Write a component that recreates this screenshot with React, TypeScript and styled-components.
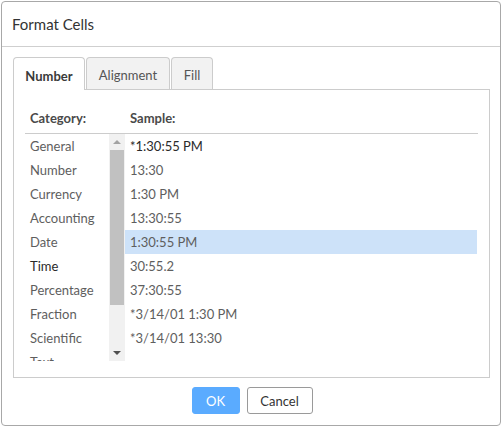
import React from "react"
import styled, { createGlobalStyle } from "styled-components"

const GlobalStyle = createGlobalStyle`
  html, body {
    margin: 0;
    padding: 0;
    background: #ffffff;
    font-family: Lato, "Open Sans", sans-serif;
  }
`

const categories = [
  "General",
  "Number",
  "Currency",
  "Accounting",
  "Date",
  "Time",
  "Percentage",
  "Fraction",
  "Scientific",
  "Text",
]

const samples = [
  "*1:30:55 PM",
  "13:30",
  "1:30 PM",
  "13:30:55",
  "1:30:55 PM",
  "30:55.2",
  "37:30:55",
  "*3/14/01 1:30 PM",
  "*3/14/01 13:30",
]

const tabs = ["Number", "Alignment", "Fill"]
const tabWidths = [72, 84, 42]

export default function App() {
  return (
    <>
      <GlobalStyle />
      <Dialog>
        <Header>
          <Title>Format Cells</Title>
        </Header>
        <Body>
          <TabBar>
            {tabs.map((t, i) => (
              <Tab key={t} $active={i === 0} $width={tabWidths[i]}>
                {t}
              </Tab>
            ))}
          </TabBar>
          <Panel>
            <Table>
              <HeadRow>
                <HeadCell $width={100}>Category:</HeadCell>
                <HeadCell $width={352}>Sample:</HeadCell>
              </HeadRow>
              <ListArea>
                <CategoryColumn>
                  <CategoryList>
                    {categories.map(c => (
                      <Item key={c} $dark={c === "Time"}>
                        {c}
                      </Item>
                    ))}
                  </CategoryList>
                  <ScrollBar>
                    <Arrow $up $disabled />
                    <Track>
                      <Thumb />
                    </Track>
                    <Arrow />
                  </ScrollBar>
                </CategoryColumn>
                <SampleList>
                  {samples.map((s, i) => (
                    <Item key={i} $dark={i === 0} $selected={i === 4}>
                      {s}
                    </Item>
                  ))}
                </SampleList>
              </ListArea>
            </Table>
          </Panel>
        </Body>
        <Footer>
          <Button $primary>OK</Button>
          <Button>Cancel</Button>
        </Footer>
      </Dialog>
    </>
  )
}

const Dialog = styled.div`
  box-sizing: border-box;
  margin: 1px 0 0 1px;
  width: 500px;
  height: 425px;
  border: 1px solid #a8a8a8;
  border-radius: 4px;
  background: #ffffff;
  display: flex;
  flex-direction: column;
`

const Header = styled.div`
  height: 44px;
  display: flex;
  align-items: center;
  padding-left: 10px;
  border-bottom: 1px solid #cfcfcf;
`

const Title = styled.div`
  font-size: 15px;
  color: #333333;
`

const Body = styled.div`
  padding: 10px 10px 0 11px;
`

const TabBar = styled.div`
  display: flex;
  gap: 1px;
  height: 32px;
  position: relative;
  z-index: 1;
`

const Tab = styled.div<{ $active?: boolean; $width: number }>`
  box-sizing: border-box;
  width: ${p => p.$width}px;
  height: ${p => (p.$active ? 33 : 32)}px;
  border: 1px solid #cccccc;
  border-bottom: none;
  border-radius: 4px 4px 0 0;
  background: ${p => (p.$active ? "#ffffff" : "#f2f2f2")};
  color: ${p => (p.$active ? "#3a3a3a" : "#555555")};
  font-weight: ${p => (p.$active ? 700 : 400)};
  font-size: 13px;
  display: flex;
  align-items: center;
  justify-content: center;
  padding-top: 3px;
`

const Panel = styled.div`
  box-sizing: border-box;
  width: 477px;
  height: 289px;
  border: 1px solid #cccccc;
  padding: 13px 11px 15px 11px;
`

const Table = styled.div`
  display: flex;
  flex-direction: column;
`

const HeadRow = styled.div`
  display: flex;
  height: 30px;
  border-bottom: 1px solid #cccccc;
`

const HeadCell = styled.div<{ $width: number }>`
  width: ${p => p.$width}px;
  padding-left: 5px;
  box-sizing: border-box;
  font-size: 13px;
  font-weight: 700;
  color: #4a4a4a;
  display: flex;
  align-items: center;
`

const ListArea = styled.div`
  display: flex;
  height: 227px;
  overflow: hidden;
`

const CategoryColumn = styled.div`
  width: 100px;
  display: flex;
`

const CategoryList = styled.div`
  width: 84px;
  display: flex;
  flex-direction: column;
`

const SampleList = styled.div`
  width: 352px;
  display: flex;
  flex-direction: column;
`

const Item = styled.div<{ $dark?: boolean; $selected?: boolean }>`
  flex: none;
  height: 24px;
  line-height: 24px;
  padding-left: 5px;
  font-size: 13px;
  white-space: nowrap;
  color: ${p => (p.$dark ? "#2a2a2a" : "#5e5e5e")};
  background: ${p => (p.$selected ? "#cde2f9" : "transparent")};
`

const ScrollBar = styled.div`
  width: 16px;
  background: #f1f1f1;
  display: flex;
  flex-direction: column;
`

const Track = styled.div`
  flex: 1;
  padding: 0 1px;
`

const Thumb = styled.div`
  height: 155px;
  background: #c1c1c1;
`

const Arrow = styled.div<{ $up?: boolean; $disabled?: boolean }>`
  height: 16px;
  display: flex;
  align-items: center;
  justify-content: center;
  &::after {
    content: "";
    width: 0;
    height: 0;
    border-left: 4px solid transparent;
    border-right: 4px solid transparent;
    ${p =>
      p.$up
        ? `border-bottom: 4px solid ${p.$disabled ? "#a3a3a3" : "#505050"};`
        : `border-top: 4px solid #505050;`}
  }
`

const Footer = styled.div`
  display: flex;
  justify-content: center;
  gap: 7px;
  padding: 9px 0 0 2px;
`

const Button = styled.button<{ $primary?: boolean }>`
  box-sizing: border-box;
  height: 27px;
  min-width: ${p => (p.$primary ? 48 : 66)}px;
  padding: 0 12px;
  border-radius: 3px;
  font-family: Lato, "Open Sans", sans-serif;
  font-size: 13px;
  cursor: pointer;
  border: 1px solid ${p => (p.$primary ? "#5aabff" : "#9a9a9a")};
  background: ${p => (p.$primary ? "#5aabff" : "#ffffff")};
  color: ${p => (p.$primary ? "#ffffff" : "#333333")};
`
